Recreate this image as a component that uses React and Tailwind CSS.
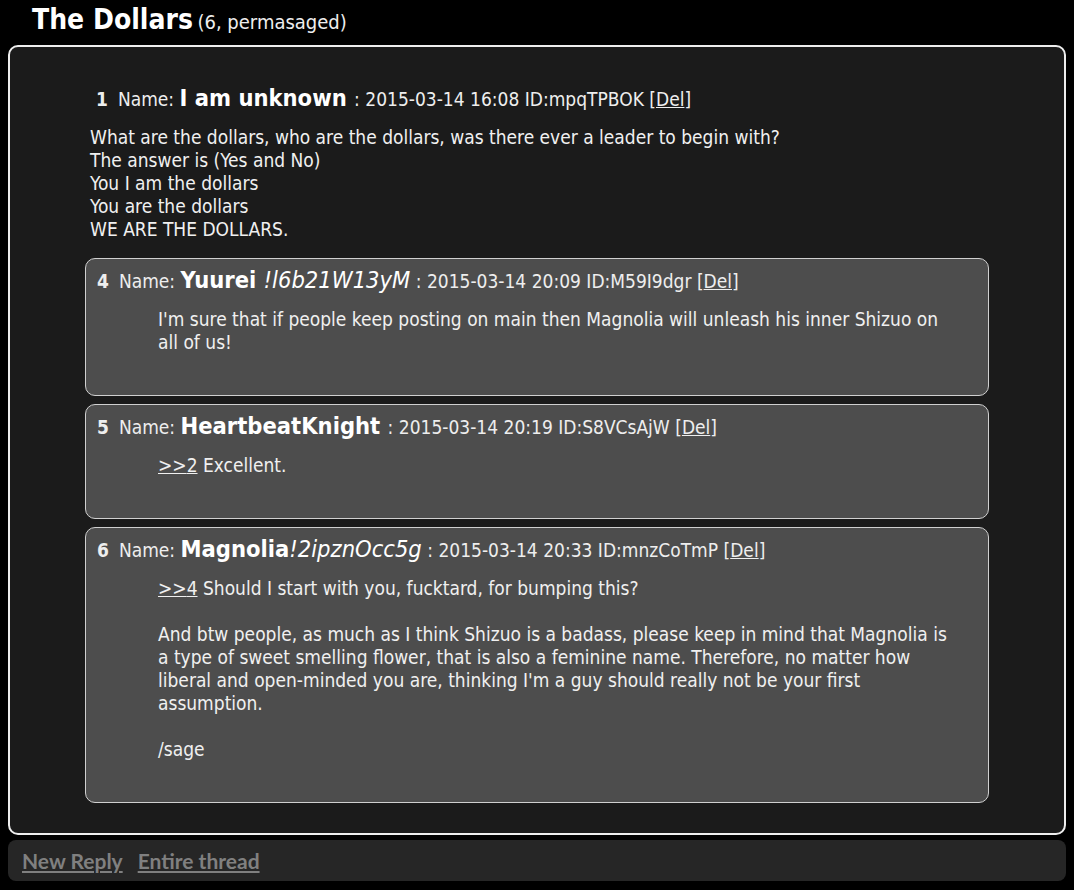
import React from 'react';

const font = { fontFamily: '"DejaVu Sans Condensed", "DejaVu Sans", sans-serif' };

const PostHeader = ({ num, name, trip, date, id }) => (
  <div className="text-[19px] leading-[26px] text-[#eeeeee] whitespace-nowrap">
    <span className="font-bold">{num}</span>
    <span className="ml-[10px]">Name: </span>
    <span className="font-bold text-[23.5px] text-white">{name}</span>
    {trip && <span className="italic text-[23.5px] text-white">{trip}</span>}
    <span> : {date} ID:{id} [<span className="underline">Del</span>]</span>
  </div>
);

const Reply = ({ num, name, trip, date, id, children }) => (
  <div className="border border-[#d0d0d0] rounded-[10px] bg-[#4d4d4d] pt-2 pb-[41px] pl-[11px] pr-10">
    <PostHeader num={num} name={name} trip={trip} date={date} id={id} />
    <div className="mt-[14px] ml-[61px] text-[19px] leading-[23px] text-[#f0f0f0]">{children}</div>
  </div>
);

const Quote = ({ to }) => <span className="underline">&gt;&gt;{to}</span>;

export default function App() {
  return (
    <div className="min-h-[890px] bg-black pt-[5px] px-2" style={font}>
      <h2 className="pl-6 text-white leading-[30px]">
        <span className="text-[28px] font-bold">The Dollars</span>{' '}
        <span className="text-[20px] text-[#eeeeee]">(6, permasaged)</span>
      </h2>

      <div className="mt-[6px] border-2 border-[#eeeeee] rounded-[10px] bg-[#1b1b1b] pt-[38px] pb-[30px] px-[75px]">
        <div className="pl-[11px]">
          <PostHeader num="1" name="I am unknown " date="2015-03-14 16:08" id="mpqTPBOK" />
        </div>
        <div className="mt-[14px] pl-[5px] text-[19px] leading-[23px] text-[#f0f0f0]">
          What are the dollars, who are the dollars, was there ever a leader to begin with?<br />
          The answer is (Yes and No)<br />
          You I am the dollars<br />
          You are the dollars<br />
          WE ARE THE DOLLARS.
        </div>

        <div className="mt-[17px] flex flex-col gap-2">
          <Reply num="4" name="Yuurei " trip="!l6b21W13yM" date="2015-03-14 20:09" id="M59I9dgr">
            I'm sure that if people keep posting on main then Magnolia will unleash his inner Shizuo on all of us!
          </Reply>
          <Reply num="5" name="HeartbeatKnight " date="2015-03-14 20:19" id="S8VCsAjW">
            <Quote to="2" /> Excellent.
          </Reply>
          <Reply num="6" name="Magnolia" trip="!2ipznOcc5g" date="2015-03-14 20:33" id="mnzCoTmP">
            <Quote to="4" /> Should I start with you, fucktard, for bumping this?<br />
            <br />
            And btw people, as much as I think Shizuo is a badass, please keep in mind that Magnolia is a type of sweet smelling flower, that is also a feminine name. Therefore, no matter how liberal and open-minded you are, thinking I'm a guy should really not be your first assumption.<br />
            <br />
            /sage
          </Reply>
        </div>
      </div>

      <div
        className="mt-[5px] rounded-[8px] bg-[#262626] h-[41px] flex items-center gap-[15px] px-[14px] text-[21px] font-bold text-[#808080]"
        style={{ fontFamily: 'Lato, sans-serif' }}
      >
        <span className="underline">New Reply</span>
        <span className="underline">Entire thread</span>
      </div>
    </div>
  );
}
